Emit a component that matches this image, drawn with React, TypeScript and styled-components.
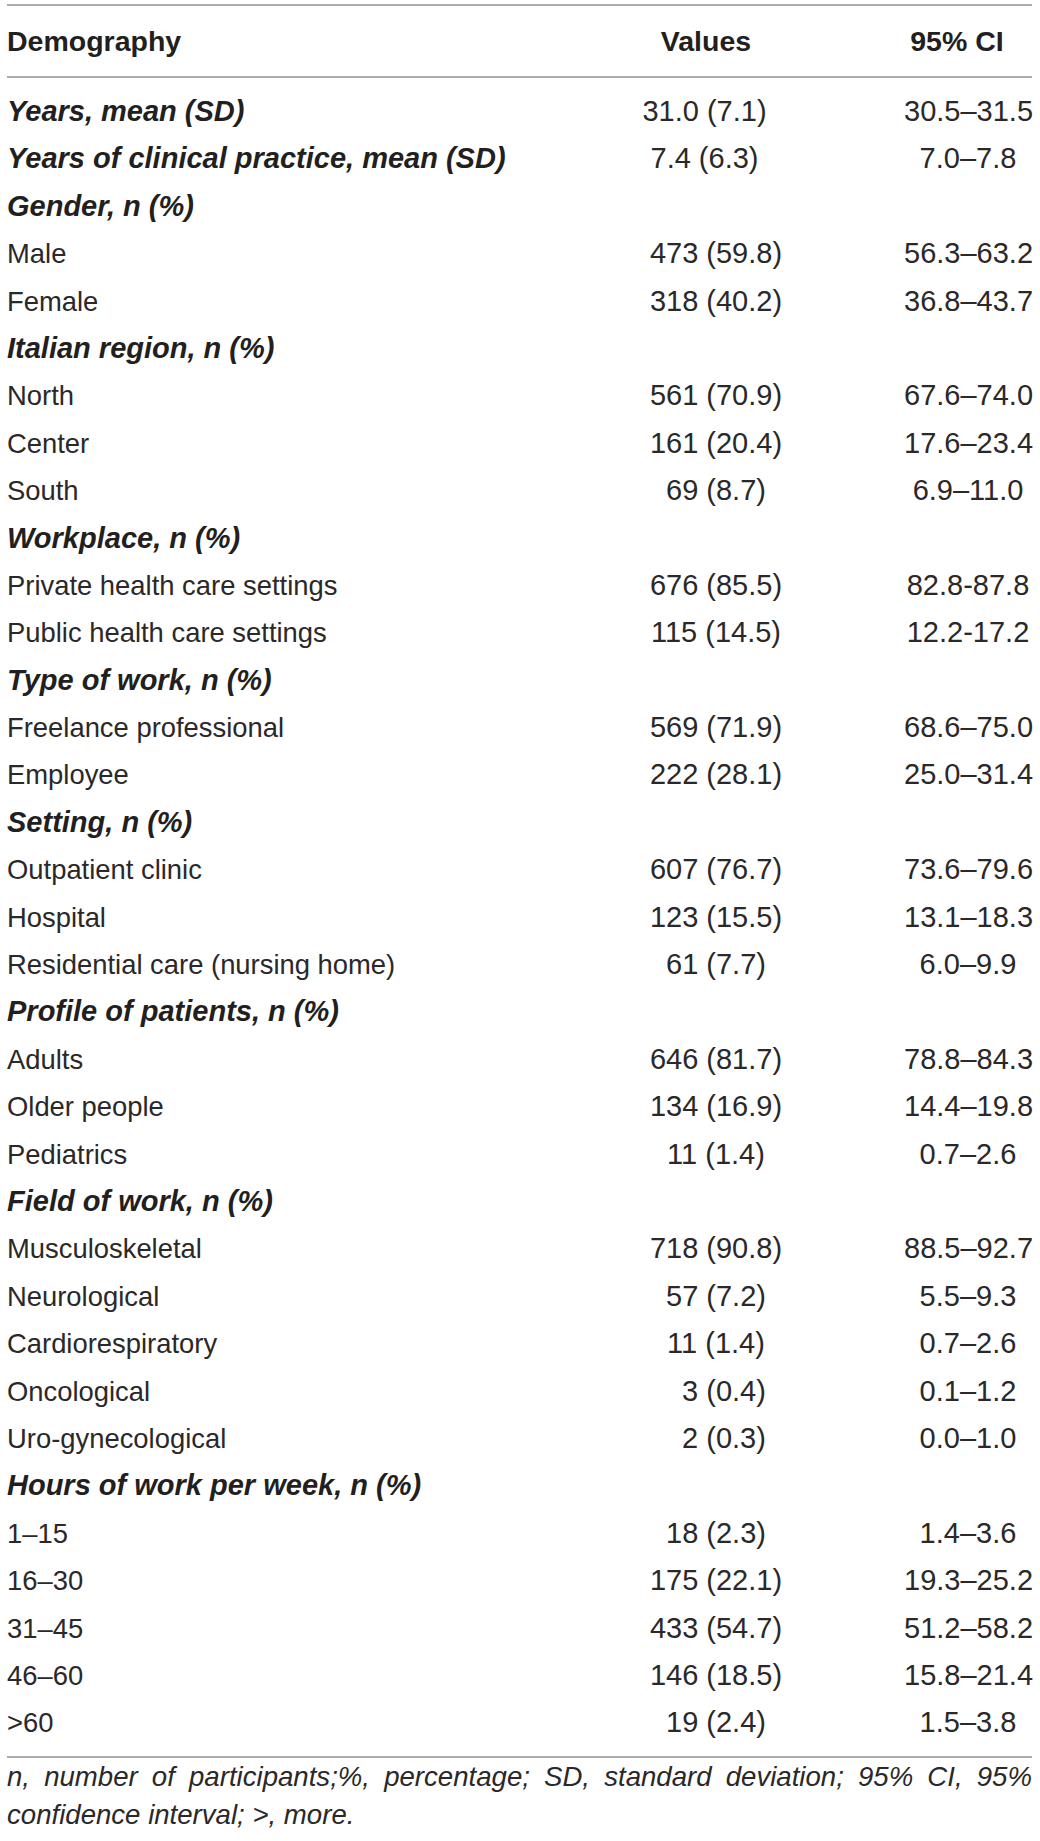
import React from "react";
import styled, { createGlobalStyle } from "styled-components";

const GlobalStyle = createGlobalStyle`
  html, body {
    margin: 0;
    padding: 0;
    background: #ffffff;
  }
  body {
    font-family: "Liberation Sans", Arial, Helvetica, sans-serif;
    color: #231f20;
  }
`;

type RowKind = "mean" | "section" | "item";

interface RowData {
  label: string;
  kind: RowKind;
  value?: string;
  ci?: string;
  pad?: boolean;
}

const rows: RowData[] = [
  { label: "Years, mean (SD)", kind: "mean", value: "31.0 (7.1)", ci: "30.5–31.5" },
  { label: "Years of clinical practice, mean (SD)", kind: "mean", value: "7.4 (6.3)", ci: "7.0–7.8" },
  { label: "Gender, n (%)", kind: "section" },
  { label: "Male", kind: "item", value: "473 (59.8)", ci: "56.3–63.2" },
  { label: "Female", kind: "item", value: "318 (40.2)", ci: "36.8–43.7" },
  { label: "Italian region, n (%)", kind: "section" },
  { label: "North", kind: "item", value: "561 (70.9)", ci: "67.6–74.0" },
  { label: "Center", kind: "item", value: "161 (20.4)", ci: "17.6–23.4" },
  { label: "South", kind: "item", value: "69 (8.7)", ci: "6.9–11.0" },
  { label: "Workplace, n (%)", kind: "section" },
  { label: "Private health care settings", kind: "item", value: "676 (85.5)", ci: "82.8-87.8" },
  { label: "Public health care settings", kind: "item", value: "115 (14.5)", ci: "12.2-17.2" },
  { label: "Type of work, n (%)", kind: "section" },
  { label: "Freelance professional", kind: "item", value: "569 (71.9)", ci: "68.6–75.0" },
  { label: "Employee", kind: "item", value: "222 (28.1)", ci: "25.0–31.4" },
  { label: "Setting, n (%)", kind: "section" },
  { label: "Outpatient clinic", kind: "item", value: "607 (76.7)", ci: "73.6–79.6" },
  { label: "Hospital", kind: "item", value: "123 (15.5)", ci: "13.1–18.3" },
  { label: "Residential care (nursing home)", kind: "item", value: "61 (7.7)", ci: "6.0–9.9" },
  { label: "Profile of patients, n (%)", kind: "section" },
  { label: "Adults", kind: "item", value: "646 (81.7)", ci: "78.8–84.3" },
  { label: "Older people", kind: "item", value: "134 (16.9)", ci: "14.4–19.8" },
  { label: "Pediatrics", kind: "item", value: "11 (1.4)", ci: "0.7–2.6" },
  { label: "Field of work, n (%)", kind: "section" },
  { label: "Musculoskeletal", kind: "item", value: "718 (90.8)", ci: "88.5–92.7" },
  { label: "Neurological", kind: "item", value: "57 (7.2)", ci: "5.5–9.3" },
  { label: "Cardiorespiratory", kind: "item", value: "11 (1.4)", ci: "0.7–2.6" },
  { label: "Oncological", kind: "item", value: "3 (0.4)", ci: "0.1–1.2", pad: true },
  { label: "Uro-gynecological", kind: "item", value: "2 (0.3)", ci: "0.0–1.0", pad: true },
  { label: "Hours of work per week, n (%)", kind: "section" },
  { label: "1–15", kind: "item", value: "18 (2.3)", ci: "1.4–3.6" },
  { label: "16–30", kind: "item", value: "175 (22.1)", ci: "19.3–25.2" },
  { label: "31–45", kind: "item", value: "433 (54.7)", ci: "51.2–58.2" },
  { label: "46–60", kind: "item", value: "146 (18.5)", ci: "15.8–21.4" },
  { label: ">60", kind: "item", value: "19 (2.4)", ci: "1.5–3.8" },
];

const Page = styled.div`
  padding: 4px 8px 0 7px;
  width: 1025px;
`;

const Table = styled.div`
  border-top: 2px solid #acacac;
  border-bottom: 2px solid #acacac;
`;

const gridTemplate = `
  display: grid;
  grid-template-columns: 1fr 152px 128px;
  column-gap: 112px;
  align-items: center;
`;

const HeadRow = styled.div`
  ${gridTemplate}
  height: 70px;
  line-height: 70px;
  border-bottom: 2px solid #acacac;
`;

const HeadCell = styled.div<{ $align: "left" | "center"; $shift?: number }>`
  font-weight: 700;
  font-size: 28.5px;
  white-space: nowrap;
  text-align: ${(p) => p.$align};
  padding-right: ${(p) => (p.$shift ? `${p.$shift}px` : "0")};
`;

const Body = styled.div`
  padding: 10px 0 9px;
`;

const Row = styled.div`
  ${gridTemplate}
  height: 47.4px;
  line-height: 47.4px;
`;

const Label = styled.div<{ $strong: boolean }>`
  white-space: nowrap;
  font-size: ${(p) => (p.$strong ? "29px" : "27.4px")};
  font-weight: ${(p) => (p.$strong ? 700 : 400)};
  font-style: ${(p) => (p.$strong ? "italic" : "normal")};
  color: ${(p) => (p.$strong ? "#231f20" : "#2b2829")};
`;

const Num = styled.div<{ $pad?: boolean; $mean?: boolean }>`
  white-space: nowrap;
  text-align: center;
  font-size: 29px;
  color: #2b2829;
  padding-left: ${(p) => (p.$pad ? "16px" : "0")};
  padding-right: ${(p) => (p.$mean ? "23px" : "0")};
`;

const Ci = styled.div`
  white-space: nowrap;
  text-align: center;
  font-size: 29px;
  color: #2b2829;
`;

const Footnote = styled.p`
  margin: 0;
  font-size: 27.6px;
  line-height: 38px;
  font-style: italic;
  text-align: justify;
  color: #2b2829;
`;

export default function App() {
  return (
    <Page>
      <GlobalStyle />
      <Table>
        <HeadRow>
          <HeadCell $align="left">Demography</HeadCell>
          <HeadCell $align="center" $shift={20}>
            Values
          </HeadCell>
          <HeadCell $align="center" $shift={22}>
            95% CI
          </HeadCell>
        </HeadRow>
        <Body>
          {rows.map((r, i) => (
            <Row key={i}>
              <Label $strong={r.kind !== "item"}>{r.label}</Label>
              <Num $pad={r.pad} $mean={r.kind === "mean"}>
                {r.value ?? ""}
              </Num>
              <Ci>{r.ci ?? ""}</Ci>
            </Row>
          ))}
        </Body>
      </Table>
      <Footnote>
        n, number of participants;%, percentage; SD, standard deviation; 95% CI, 95% confidence
        interval; &gt;, more.
      </Footnote>
    </Page>
  );
}
